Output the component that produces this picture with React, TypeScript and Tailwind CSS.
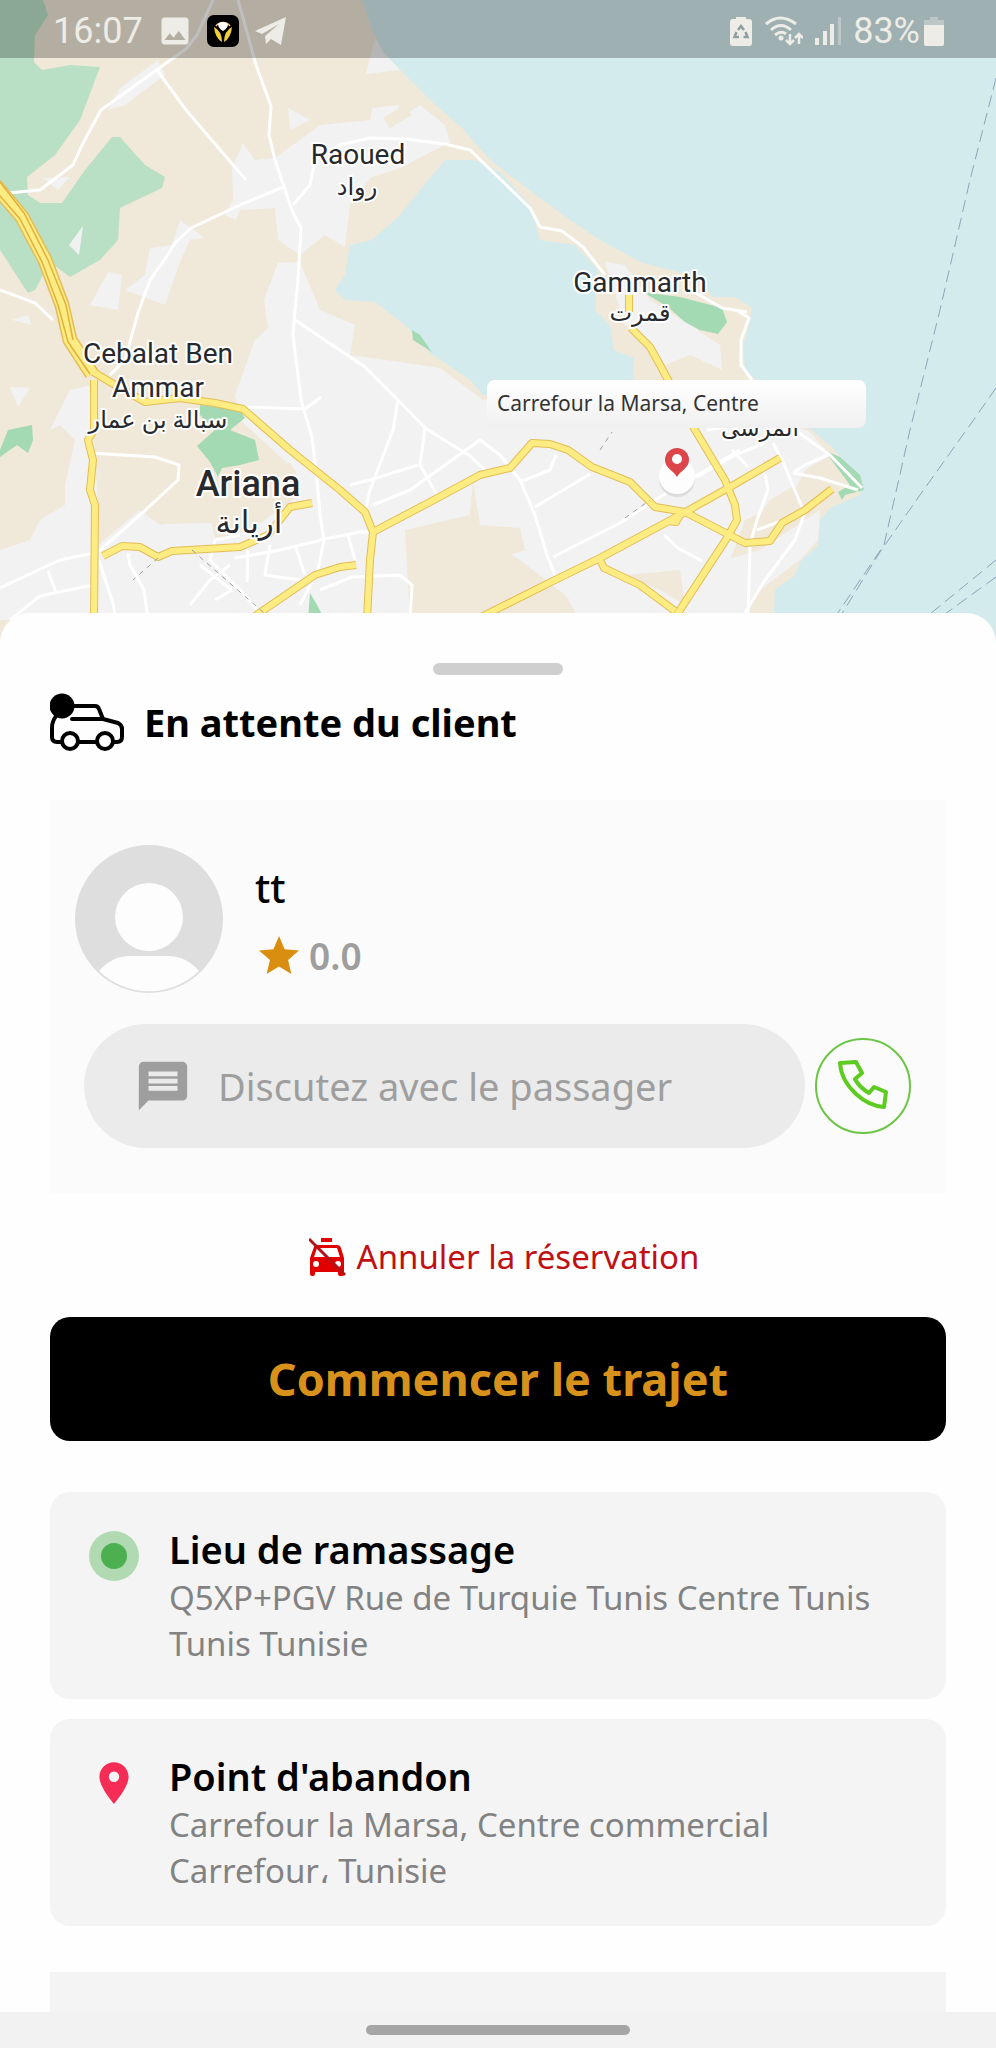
import React from 'react';
import { MdImage, MdMessage, MdPlace, MdStar } from 'react-icons/md';

const highways = [
  'M94 380V430L88 440L93 460L90 490L95 505L94 620',
  'M85 367L110 382L145 402L180 398L215 403L243 409L290 450L340 490L365 512L373 532L370 560L367 620',
  'M103 556L122 546L140 547L158 557L172 551L240 547L268 535L290 507L312 503',
  'M255 616L315 575L340 567L356 565',
  'M373 532L430 502L480 475L510 468L532 443L550 444L568 450L592 467L630 482L655 507L685 512L745 543L770 541L782 523L805 510L832 489',
  'M475 620L555 580L600 558L680 515L730 487L780 458',
  'M680 515L676 522L668 521',
  'M600 560L604 568L640 585L675 611',
  'M676 616L727 538L737 520L735 505L725 480L695 430L660 365L650 347L631 328',
  'M629 295V312',
];

const roads = [
  'M213 0L197 35L186 49L158 69L101 110L82 145L73 165L40 190L8 193',
  'M238 0L245 25L256 65L271 106L269 135L275 160L293 213L301 228L298 280L295 310L293 335L301 400L312 437L317 480L320 515L324 540L318 570L300 605',
  'M157 70L186 110L246 180',
  'M283 187L240 205L191 228L175 243L165 259L150 280L138 313L125 360L110 375',
  'M293 205L310 185L315 160L340 145L370 138L405 139L445 144L470 150L496 175L530 208L540 227L562 231L583 247L605 275',
  'M295 320L365 367L398 400L425 428L470 456L485 470',
  'M398 400L393 430L370 490L365 512',
  'M425 428L420 465L437 495',
  'M373 505L410 490L480 440L500 455L520 480L535 515L547 555L557 580',
  'M320 540L360 532L372 532',
  'M350 485L370 480L418 465',
  'M244 407L305 409L321 397',
  'M90 453L155 457L179 465L178 480L140 515L98 552L60 560L0 588',
  'M0 290L35 303L53 320',
  'M98 558L113 603L116 620',
  'M128 553L130 565L144 590L148 620',
  'M10 620L40 596L93 585',
  'M48 571L56 592',
  'M240 535L215 540L210 560L240 590L260 613',
  'M235 558L280 550L322 540',
  'M200 565L232 590L215 600',
  'M248 550L247 582',
  'M270 545L265 575L300 580',
  'M296 548L305 575',
  'M190 605L210 580L230 565',
  'M355 560L348 535',
  'M320 590L352 577L400 575L412 585L410 620',
  'M520 482L550 470L556 455',
  'M535 507L590 474',
  'M553 557L620 523L660 497L740 450',
  'M664 535L678 548L702 561',
  'M697 477L735 455L765 443',
  'M707 430L745 424L795 430L830 455L862 488',
  'M732 450L748 467',
  'M773 443L782 460L802 507',
  'M793 473L805 465L828 455',
  'M793 473L820 478L858 490',
  'M765 474L768 490L757 520L750 545L748 620',
  'M757 530L805 512L795 540L765 580L745 613',
  'M696 293L722 308L747 312',
  'M738 311L749 318L741 340L741 365L752 380',
];

const urban = [
  'M158 60L120 88L108 110L125 105L165 75Z',
  'M288 108L310 120L290 130Z',
  'M375 38L400 70L366 74Z',
  'M43 178L70 177L58 190Z',
  'M243 143L255 160L275 158L320 125L370 120L372 108L400 105L390 125L420 105L445 125L450 142L400 168L370 178L350 205L345 247L325 235L300 255L278 240L275 208L240 210L236 220L225 215L233 200L232 168Z',
  'M180 220L205 238L190 240L180 262L165 305L125 290L145 275L150 248L172 245Z',
  'M108 272L122 275L118 310L90 305Z',
  'M278 263L300 262L320 310L355 325L350 355L400 362L440 368L483 400L520 390L640 400L640 430L560 470L500 475L470 510L470 530L410 530L412 620L0 620L0 550L30 540L40 520L65 505L65 485L75 440L60 425L50 430L70 390L92 385L95 455L105 500L120 510L95 525L98 545L140 510L160 525L210 515L215 540L250 530L300 495L295 470L240 420L235 395L255 340L268 328L264 300Z',
  'M12 320L28 315L32 325Z',
  'M10 387L30 388L18 407Z',
  'M480 470L600 400L690 385L810 432L830 455L805 470L790 500L745 520L730 560L705 585L690 620L580 620L565 595L520 560L470 530Z',
  'M605 262L625 265L650 300L690 325L720 345L722 370L690 355L665 365L650 340L625 325Z',
  'M800 560L760 590L740 620L680 620L690 570L760 550L820 510L818 540Z',
];

const places = [
  { name: 'Raoued', x: 358, y: 164, arabic: 'رواد', ax: 357, ay: 195 },
  { name: 'Gammarth', x: 640, y: 292, arabic: 'قمرت', ax: 640, ay: 321 },
  { name: 'Cebalat Ben', x: 158, y: 363, arabic: '', ax: 0, ay: 0 },
  { name: 'Ammar', x: 158, y: 397, arabic: 'سبالة بن عمار', ax: 158, ay: 428 },
];

const stops = [
  {
    id: 'pickup',
    title: 'Lieu de ramassage',
    address: 'Q5XP+PGV Rue de Turquie Tunis Centre Tunis Tunis Tunisie',
  },
  {
    id: 'dropoff',
    title: "Point d'abandon",
    address: 'Carrefour la Marsa, Centre commercial Carrefour، Tunisie',
  },
];

const MapView: React.FC = () => (
  <svg
    viewBox="0 0 996 660"
    preserveAspectRatio="xMidYMin slice"
    className="w-full h-full"
    role="img"
    aria-label="Carte de Tunis"
  >
    <rect width="996" height="660" fill="#f0e8d9" />

    {/* Parks on the west side */}
    <g fill="#b9e0c5">
      <path d="M0 0H43L48 15L35 35L34 62L42 70L70 65L100 67L80 120L55 155L27 177L28 195L40 203H62L85 170L112 137L120 137L145 165L165 177L162 188L120 208L118 240L100 260L70 277L50 262L35 290L28 293L0 250Z" />
    </g>
    <path d="M83 226L79 255L69 245Z" fill="#f0f2f2" />

    {/* Urban areas */}
    <g fill="#f2f2f3">
      {urban.map((d) => (
        <path key={d} d={d} />
      ))}
    </g>
    <g fill="#f0e8d9">
      <path d="M240 463H290L300 480L290 492L215 523L160 524L153 500L180 468L155 458L95 455L100 480L125 505L100 545L95 455L92 390L200 398L198 445L215 465Z" />
      <path d="M405 530L470 515L473 480L480 525L520 528L525 550L510 555L545 585L570 600L480 620H410Z" />
      <path d="M770 500L795 485L800 505L765 540L745 535Z" />
      <path d="M625 575L680 570L685 605L660 590Z" />
      <path d="M383 118L405 105L412 115L390 128Z" />
    </g>

    {/* Sea and lagoon */}
    <g fill="#d4ebee">
      <path d="M362 0L372 30L383 52L405 75L430 100L462 128L490 160L540 198L570 220L600 240L640 262L700 278L712 297L735 297L752 308L748 330L743 345L745 370L800 420L835 450L862 485L860 495L830 508L820 520L818 545L800 562L795 575L775 590L772 660H996V0Z" />
      <path d="M445 160H475L500 172L530 205L540 240L575 245L598 270L595 310L610 325L614 350L634 358L632 395H483L470 380L430 353L405 325L375 302L345 300L335 290L345 275L350 245L372 240L400 215L420 190Z" />
    </g>

    <g fill="#a3d9b3">
      <path d="M0 450L8 430L32 425L33 440L28 453L17 445L0 457Z" />
      <path d="M200 405L240 410L245 418L230 430L255 440L259 460L240 465L222 468L218 477L210 462L197 446L215 430L200 415Z" />
      <path d="M412 330L420 335L432 352L413 340Z" />
      <path d="M643 292L680 297L722 308L727 322L718 334L700 330L685 322L668 307Z" />
      <path d="M824 450L840 457L860 475L864 490L845 495L842 500L838 492L850 485Z" />
      <path d="M308 620L310 593L317 605L325 620Z" />
    </g>

    <g fill="none" stroke="#fff" strokeWidth="3" strokeLinejoin="round">
      {roads.map((d) => (
        <path key={d} d={d} />
      ))}
    </g>

    {/* Highways, dark casing first and then the fill */}
    <g fill="none" stroke="#e3bd55" strokeWidth="8" strokeLinejoin="round">
      {highways.map((d) => (
        <path key={d} d={d} />
      ))}
      <path d="M-5 185L22 217L45 260L62 305L70 340L92 374" strokeWidth="15" />
    </g>
    <g fill="none" stroke="#fdec82" strokeWidth="6" strokeLinejoin="round">
      {highways.map((d) => (
        <path key={d} d={d} />
      ))}
      <path d="M-5 185L22 217L45 260L62 305L70 340L92 374" strokeWidth="12" />
    </g>
    <path
      d="M-5 190L20 219L42 262L58 305L68 342L90 374M0 182L24 213L48 260L66 305L73 340"
      fill="none"
      stroke="#e0b040"
      strokeWidth="1.5"
    />

    {/* Ferry and rail lines */}
    <g fill="none" stroke="#8fa3b8" strokeWidth="1" strokeDasharray="12 6">
      <path d="M996 78L970 180L940 310L910 430L884 545L833 620" />
      <path d="M996 388L970 425L920 495L880 552L838 620" />
      <path d="M996 560L930 614" />
      <path d="M996 577L945 614" />
    </g>
    <g fill="none" stroke="#9aa0a6" strokeWidth="1" strokeDasharray="5 5">
      <path d="M158 558L133 580" />
      <path d="M192 550L264 613" />
      <path d="M600 450L612 432M625 518L650 500" />
    </g>

    <g
      textAnchor="middle"
      fill="#27292c"
      stroke="#fff"
      strokeWidth="4"
      strokeLinejoin="round"
      paintOrder="stroke"
      className="font-['Roboto','DejaVu_Sans',sans-serif]"
    >
      {places.map((place) => (
        <React.Fragment key={place.name}>
          <text x={place.x} y={place.y} fontSize="28">
            {place.name}
          </text>
          <text x={place.ax} y={place.ay} fontSize="24">
            {place.arabic}
          </text>
        </React.Fragment>
      ))}
      <text x="248" y="496" fontSize="36" fontWeight="500">
        Ariana
      </text>
      <text x="249" y="533" fontSize="31">
        أريانة
      </text>
      <text x="760" y="436" fontSize="23">
        المرسى
      </text>
    </g>

    {/* Destination marker */}
    <circle cx="677" cy="479" r="18" fill="#dcdcdc" />
    <circle cx="677" cy="476" r="18" fill="#fdfdfd" />
    <path
      d="M677 448a12 12 0 0 0-12 12c0 8 8 10 12 17c4-7 12-9 12-17a12 12 0 0 0-12-12z"
      fill="#dc4549"
    />
    <circle cx="677" cy="459" r="5" fill="#fff" />
  </svg>
);

const StatusBar: React.FC = () => (
  <div className="absolute inset-x-0 top-0 h-[58px] bg-black/25 flex items-center justify-between pl-[53px] pr-[52px] pt-1 text-[#eeece6] font-['Roboto',sans-serif] text-[36px] leading-none">
    <div className="flex items-center gap-3.5">
      <span>16:07</span>
      <MdImage size={36} />
      <svg width="32" height="32" viewBox="0 0 32 32">
        <rect width="32" height="32" rx="7" fill="#000" />
        <path d="M9 11a8 7 0 0 1 14 0" fill="none" stroke="#f3b98a" strokeWidth="1.5" />
        <path d="M11 9q5-4 10 0q0 4-5 7q-5-3-5-7z" fill="#fff" />
        <path d="M7 12q8 4 8 15q-7-4-8-15zM25 12q-8 4-8 15q7-4 8-15z" fill="#f0cf3c" />
      </svg>
      <svg width="34" height="30" viewBox="0 0 34 30" fill="currentColor">
        <path d="M2 15L33 1L28 29L18 23L13 28L12 20L26 8L9 18Z" />
      </svg>
    </div>
    <div className="flex items-center gap-3">
      <svg width="22" height="30" viewBox="0 0 22 30">
        <path d="M6 3V1h10v2h3a3 3 0 0 1 3 3v21a3 3 0 0 1-3 3H3a3 3 0 0 1-3-3V6a3 3 0 0 1 3-3z" fill="currentColor" />
        <path
          d="M8 14l3-4l3 4M15.500 16l2 5h-4M9 21H4.500l2-5"
          fill="none"
          stroke="#8f9f9f"
          strokeWidth="2.500"
        />
      </svg>
      <svg width="39" height="30" viewBox="0 0 39 30" fill="none" stroke="currentColor">
        <path d="M2 8Q16-4 32 8M7 14Q17 5 27 14M11 19Q17 14 22 18" strokeWidth="3" />
        <circle cx="17" cy="22" r="2.500" fill="currentColor" stroke="none" />
        <path d="M26 18V28M22 24L26 28L30 24M35 28V18M31 22L35 18L39 22" strokeWidth="2.500" />
      </svg>
      <svg width="26" height="28" viewBox="0 0 26 28" fill="currentColor">
        <path d="M0 21h4v7H0zM8 14h4v14H8zM15 7h4v21h-4z" />
        <path d="M23 0h3v28h-3z" opacity="0.4" />
      </svg>
      <div className="flex items-center gap-1">
        <span>83%</span>
        <svg width="20" height="30" viewBox="0 0 20 30" fill="currentColor">
          <path d="M6 1h8v3h6v5H0V4h6z" opacity="0.4" />
          <path d="M0 9h20v19a2 2 0 0 1-2 2H2a2 2 0 0 1-2-2z" />
        </svg>
      </div>
    </div>
  </div>
);

const CarIcon: React.FC = () => (
  <svg width="74" height="58" viewBox="0 0 74 58" fill="none" stroke="#000" strokeWidth="4" strokeLinejoin="round" strokeLinecap="round">
    <path d="M22 13H45Q48 13 49 16L53 26L68 30Q72 32 72 36V44Q72 49 67 49H64M46 49H29M11 49H7Q2 49 2 44V34Q2 29 6 23" />
    <path d="M22 26H53" />
    <circle cx="20" cy="48" r="8" />
    <circle cx="55" cy="48" r="8" />
    <circle cx="12" cy="13" r="12.500" fill="#000" stroke="none" />
  </svg>
);

const NoTaxiIcon: React.FC = () => (
  <svg width="38" height="40" viewBox="0 0 38 40">
    <path d="M12 1h11v4H12z" fill="#e00000" />
    <path
      fillRule="evenodd"
      d="M8 8h20q3 0 4 3l3 10v16q0 2-2 2h-2q-2 0-2-2v-2H6v2q0 2-2 2H3q-2 0-2-2V21L5 10q1-2 3-2zM8 11L5 20H31L28 11zM7 24a3 3 0 1 0 0 6a3 3 0 1 0 0-6zM29 24a3 3 0 1 0 0 6a3 3 0 1 0 0-6z"
      fill="#e00000"
    />
    <path d="M0 2L36 38" stroke="#b31217" strokeWidth="3" />
  </svg>
);

const Avatar: React.FC = () => (
  <svg width="150" height="150" viewBox="0 0 150 150" className="shrink-0" role="img" aria-label="Passager">
    <circle cx="75" cy="75" r="74" fill="#dedede" />
    <circle cx="75" cy="73" r="34" fill="#fdfdfd" />
    <path d="M25 127Q38 112 56 112H94Q112 112 125 127A72 72 0 0 1 25 127Z" fill="#fdfdfd" />
  </svg>
);

export default function App() {
  return (
    <div className="h-screen flex flex-col bg-[#fefefe] text-black font-['Noto_Sans','DejaVu_Sans',sans-serif]">
      <header className="relative h-[660px] shrink-0 -mb-[47px] overflow-hidden">
        <MapView />
        <StatusBar />
        <div className="absolute top-[380px] left-[487px] w-[379px] h-12 rounded-lg bg-linear-to-b from-white to-[#f0f0f0] px-2.5 flex items-center text-[21px] text-[#333]">
          Carrefour la Marsa, Centre
        </div>
      </header>

      <main className="relative flex-1 min-h-0 overflow-hidden flex flex-col bg-[#fefefe] rounded-t-[30px] px-[50px] pt-[50px]">
        <div className="w-[130px] h-3 shrink-0 rounded-full bg-[#cfcfcf] self-center" />

        <div className="flex items-center gap-5 mt-[18px] h-[58px] shrink-0">
          <CarIcon />
          <h1 className="text-[38px] leading-none font-bold">En attente du client</h1>
        </div>

        <section className="mt-[49px] h-[393px] shrink-0 bg-[#fbfbfb] pt-11 pl-6 pr-[35px]">
          <div className="flex gap-[31px]">
            <Avatar />
            <div className="pt-5">
              <h2 className="text-[40px] leading-12 font-medium">tt</h2>
              <div className="flex items-center gap-1.5 mt-5 text-[37px] leading-12 font-semibold text-[#9e9e9e]">
                <MdStar size={48} color="#d98e10" />
                0.0
              </div>
            </div>
          </div>
          <div className="flex items-center gap-2.5 mt-[30px] ml-2.5">
            <button className="flex-1 h-[124px] rounded-full bg-[#ebebeb] flex items-center pl-[50px] gap-[26px] text-[38px] text-[#9e9e9e]">
              <MdMessage size={58} />
              Discutez avec le passager
            </button>
            <button
              aria-label="Appeler"
              className="w-24 h-24 rounded-full border-2 border-[#6cc544] flex items-center justify-center"
            >
              <svg width="50" height="52" viewBox="-1 0 50 52" fill="none" stroke="#5ecb20" strokeWidth="4" strokeLinejoin="round">
                <path d="M1 3L17 2L23 13L16 19Q20 27 30 33L35 27L47 32L45 47Q30 46 17 34Q2 20 1 3Z" />
              </svg>
            </button>
          </div>
        </section>

        <button className="mt-10 h-12 pl-3 shrink-0 self-center flex items-center gap-2.5 text-[33px] text-[#c01014]">
          <NoTaxiIcon />
          Annuler la réservation
        </button>

        <button className="mt-9 h-[124px] shrink-0 rounded-[20px] bg-black text-[#d8921c] text-[45px] font-bold">
          Commencer le trajet
        </button>

        <div className="flex flex-col gap-5 mt-[51px] shrink-0">
          {stops.map((stop) => (
            <section key={stop.id} className="bg-[#f4f4f4] rounded-[20px] pl-[39px] pr-[60px] pt-[31px] pb-8 flex gap-[30px]">
              <div className="w-[50px] pt-2 shrink-0">
                {stop.id === 'pickup' ? (
                  <div className="w-[50px] h-[50px] rounded-full bg-[#b1dab2] flex items-center justify-center">
                    <div className="w-[26px] h-[26px] rounded-full bg-[#4caf50]" />
                  </div>
                ) : (
                  <MdPlace size={50} color="#f52d56" />
                )}
              </div>
              <div>
                <h3 className="text-[38px] leading-[52px] font-semibold">{stop.title}</h3>
                <p className="text-[33px] leading-[46px] text-[#828282]">{stop.address}</p>
              </div>
            </section>
          ))}
        </div>

        <div className="mt-[46px] flex-1 bg-[#f4f4f4]" />
      </main>

      <footer className="relative h-9 shrink-0 bg-[#f2f2f2] flex items-center justify-center">
        <div className="w-[264px] h-2.5 rounded-full bg-[#a6a6a6]" />
      </footer>
    </div>
  );
}
